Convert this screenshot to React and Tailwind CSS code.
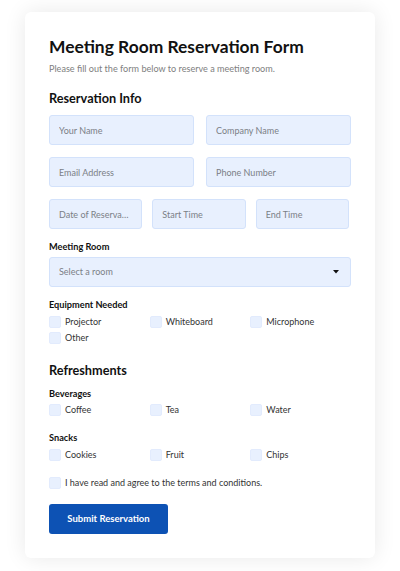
import { useState } from "react";

function Field({ placeholder }) {
    return (
        <input
            type="text"
            placeholder={placeholder}
            className="w-full h-[30px] px-[9px] text-[9px] text-gray-700 placeholder:text-[#7b7f86] bg-[#e8f0fe] border border-[#d3e2fb] rounded-[3px] outline-none truncate"
        />
    );
}

function Check({ label }) {
    const [on, setOn] = useState(false);
    return (
        <label className="flex items-center h-[14px] gap-[4px] text-[9px] text-[#333] cursor-pointer">
            <span
                onClick={() => setOn(!on)}
                className={"w-[12px] h-[12px] rounded-[2px] border border-[#e2ebfd] " + (on ? "bg-[#0d52b4]" : "bg-[#e8f0fe]")}
            ></span>
            {label}
        </label>
    );
}

export default function App() {
    return (
        <div className="min-h-[571px] bg-white px-[25px] pt-[12px] pb-[13px]" style={{ fontFamily: 'Lato, "Open Sans", sans-serif' }}>
            <div className="bg-white rounded-[6px] shadow-[0_0_22px_rgba(0,0,0,0.09)] px-6 pt-[23px] pb-[24px]">
                <h1 className="text-[17.4px] leading-[24px] font-bold text-[#111]">Meeting Room Reservation Form</h1>
                <p className="mt-[3px] text-[9.1px] leading-[14px] text-[#808080]">Please fill out the form below to reserve a meeting room.</p>

                <h2 className="mt-[13px] text-[12.7px] leading-[18px] font-bold text-[#111]">Reservation Info</h2>
                <div className="mt-[8px] grid grid-cols-2 gap-x-[12px] gap-y-[12px]">
                    <Field placeholder="Your Name" />
                    <Field placeholder="Company Name" />
                    <Field placeholder="Email Address" />
                    <Field placeholder="Phone Number" />
                </div>
                <div className="mt-[12px] w-[300px] grid grid-cols-3 gap-[10px]">
                    <Field placeholder="Date of Reservation" />
                    <Field placeholder="Start Time" />
                    <Field placeholder="End Time" />
                </div>

                <div className="mt-[11px] text-[9.2px] leading-[13px] font-bold text-[#111]">Meeting Room</div>
                <div className="mt-[4px] relative">
                    <select className="w-full h-[30px] px-[9px] text-[9px] text-[#7b7f86] bg-[#e8f0fe] border border-[#d3e2fb] rounded-[3px] outline-none appearance-none">
                        <option>Select a room</option>
                        <option>Conference Room A</option>
                        <option>Conference Room B</option>
                    </select>
                    <svg className="absolute right-[12px] top-[13px] pointer-events-none" width="6" height="4" viewBox="0 0 6 4">
                        <path d="M0 0h6L3 3.5z" fill="#111" />
                    </svg>
                </div>

                <div className="mt-[11px] text-[9.2px] leading-[13px] font-bold text-[#111]">Equipment Needed</div>
                <div className="mt-[4px] grid grid-cols-3 gap-y-[2px]">
                    <Check label="Projector" />
                    <Check label="Whiteboard" />
                    <Check label="Microphone" />
                    <Check label="Other" />
                </div>

                <h2 className="mt-[16px] text-[12.7px] leading-[18px] font-bold text-[#111]">Refreshments</h2>
                <div className="mt-[8px] text-[9.2px] leading-[13px] font-bold text-[#111]">Beverages</div>
                <div className="mt-[3px] grid grid-cols-3">
                    <Check label="Coffee" />
                    <Check label="Tea" />
                    <Check label="Water" />
                </div>
                <div className="mt-[14px] text-[9.2px] leading-[13px] font-bold text-[#111]">Snacks</div>
                <div className="mt-[4px] grid grid-cols-3">
                    <Check label="Cookies" />
                    <Check label="Fruit" />
                    <Check label="Chips" />
                </div>

                <div className="mt-[14px]">
                    <Check label="I have read and agree to the terms and conditions." />
                </div>

                <button className="mt-[14px] w-[119px] h-[30px] bg-[#0d52b4] rounded-[3px] text-white text-[9.5px] font-bold">Submit Reservation</button>
            </div>
        </div>
    );
}
